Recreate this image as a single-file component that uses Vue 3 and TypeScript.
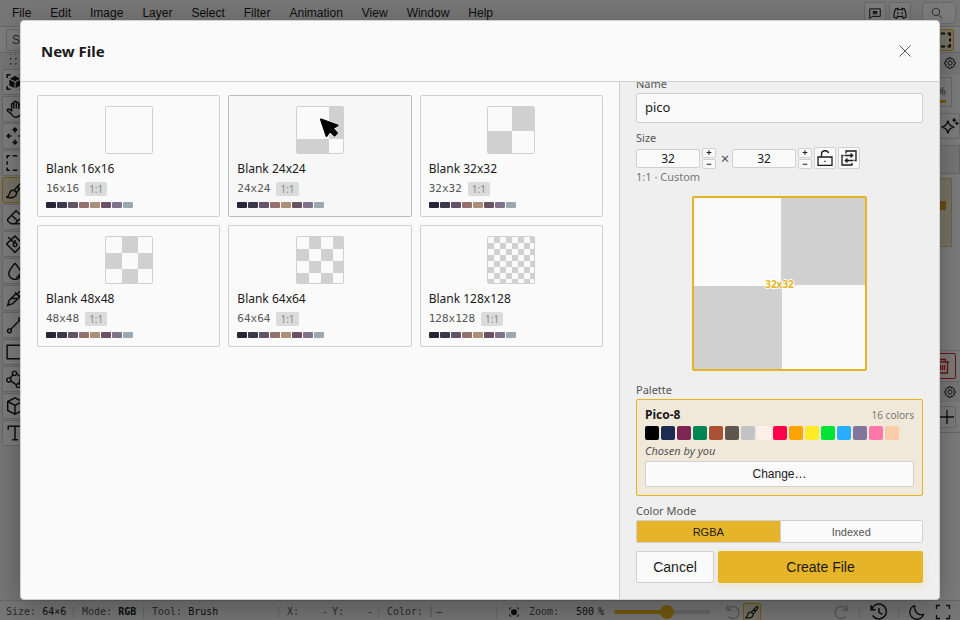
<script setup lang="ts">
import { ref } from 'vue'

interface Preset {
  size: number
  cell: string
}

const menus = ['File', 'Edit', 'Image', 'Layer', 'Select', 'Filter', 'Animation', 'View', 'Window', 'Help']

const presets: Preset[] = [16, 24, 32, 48, 64, 128].map((size) => ({
  size,
  cell: `${(48 * 32) / size}px`,
}))

const miniPalette = ['#292438', '#3c384c', '#625367', '#94716c', '#aa9079', '#6c5064', '#80728a', '#9ba8b1']

const pico = [
  '#000000', '#1d2b53', '#7e2553', '#008751', '#ab5236', '#5f574f', '#c2c3c7', '#fbf1e8',
  '#ff004d', '#ffa300', '#ffec27', '#00e436', '#29adff', '#83769c', '#ff77a8', '#f9ccaa',
]

const icons: Record<string, string> = {
  hand: 'M5 12.500 1.500 9.800c-1-1.400.6-2.400 1.600-1.400L5 9.500V4c0-1.500 2-1.500 2 0V7.500 2.200c0-1.500 2.200-1.500 2.200 0V7.500 3c0-1.400 2.200-1.400 2.200 0v5V5c0-1.400 2.200-1.400 2.200 0v5c0 3-2 5.300-4.700 5.300S6 14.500 5 12.500',
  move: 'M8 1v4M6 3l2-2 2 2M8 15v-4M6 13l2 2 2-2M1 8h4M3 6 1 8l2 2M15 8h-4M13 6l2 2-2 2',
  marquee: 'M1 4V1.500h2.500M6 1.500h4M12.500 1.500H15V4M15 6.500v3M15 12v2.500h-2.500M10 14.500H6M3.500 14.500H1V12M1 9.500v-3',
  brush: 'M7 8.500 13 2c1-1 2.500.3 1.700 1.500L9.500 10M7 8.500 9.500 10M6.800 8.300C4.500 7.800 3.500 9.500 3 11.500c-.4 1.500-1 2.500-2.500 3 4 .8 9 .5 9-4.500M10 5l2.700 2.500',
  eraser: 'M1.500 10 9 2.500l5.500 5L8 14H4.500L1.500 11.500zM5 6.500l5.500 5M4.500 14H15',
  bucket: 'M8 1 15 8l-7 7.500L.5 8zM2 2l6 5.500M8 4.500V7M8 7a1.600 1.600 0 1 0 .1 0',
  drop: 'M8 1C5 5 2.500 7 2.500 10.500a5.500 5 0 0 0 11 0C13.500 7 11 5 8 1M9 13.500c2 0 3-1.500 3-3',
  dropper: 'M9 4l3.500 3.500M8 3l5.500 5.500M10 4.500 12.500 2c1.200-1.200 3 .6 1.800 1.800L12 6.500M8.500 4.500 3 10l-1.500 4.500L6 13l5.500-5.500M5 8.500h5.500',
  line: 'M4.500 11.500l7-7M3 11.500a1.700 1.700 0 1 0 .1 0M13 1.300a1.700 1.700 0 1 0 .1 0',
  rect: 'M1 2h15v12H1z',
  poly: 'M3.500 7.500 6 4.500M9.500 3.500 13 6l-1.500 7M4 9.500l5.500 4M7.500 1a1.900 1.900 0 1 0 .1 0M2.500 7a1.900 1.900 0 1 0 .1 0M11 12a1.900 1.900 0 1 0 .1 0',
  cube: 'M8 .8 14.500 4v8L8 15.200 1.500 12V4zM1.500 4 8 7.500 14.500 4M8 7.500v7.700',
  text: 'M2 5V2h12v3M8 2v12M5.500 14h5',
  chat: 'M1 2.500h14v10H4.500L1 15.500zM5 6h6M5 9h6M5 7.500h6',
  search: 'M6.500 1.500a5 5 0 1 0 .1 0M10 10.500l5 5',
  gear: 'M6.700 1h2.600l.5 2 2.200-.8 1.700 1.800-.8 2 2.100.9v2.400l-2.100.8.8 2.100-1.700 1.800-2.200-.9-.5 2.100H6.700l-.6-2.100-2.100.9-1.800-1.800.9-2.100-2.100-.8V6.900l2.100-.9-.9-2L4 2.200l2.100.8zM8 5.200a2.800 2.800 0 1 0 .1 0',
  spark: 'M6.500 3c1 4 2 5 6 6-4 1-5 2-6 6-1-4-2-5-6-6 4-1 5-2 6-6M12.500.5v4M10.500 2.500h4M15 4v3M13.500 5.500h3',
  trash: 'M2 4h13M5.500 4V1.500h6V4M3.500 4v11h10V4M6.500 7v5M8.500 7v5M10.500 7v5',
  plus: 'M8 1v14M1 8h14',
  lock: 'M1 7h14v8.500H1zM4.500 7V4c0-4 6-4.300 7-1M8 10.700v1.200',
  swap: 'M5 3.500V1h10v9.500h-1.500M11 13v2H1V5.500h1.500M3.500 5.500h8M9.500 3.500l2.200 2-2.200 2M12.500 10.500h-8M6.500 8.500l-2.200 2 2.200 2',
  undo: 'M2 1.500v4.500h4.500M2.500 6a6 6 0 1 1 1 6.500',
  redo: 'M14 1.500v4.500H9.500M13.500 6a6 6 0 1 0-1 6.500',
  history: 'M1 2v4h4M1.500 6a6.600 6.600 0 1 1 .8 5M8 4.500v4l3 1.500',
  moon: 'M6 1.500A7 7 0 1 0 14.500 10.500C9 12 4.500 7.500 6 1.500',
  full: 'M1.500 5V1.500H5M11 1.500h3.500V5M14.500 11v3.500H11M5 14.500H1.500V11',
}

const tools = ['focus', 'hand', 'move', 'marquee', 'brush', 'eraser', 'bucket', 'drop', 'dropper', 'line', 'rect', 'poly', 'cube', 'text']

const name = ref('pico')
const width = ref('32')
const height = ref('32')
const zoom = ref(56)
const mode = ref('RGBA')
</script>

<template>
  <div class="app">
    <header class="menubar">
      <nav class="menus">
        <button v-for="m in menus" :key="m" type="button">{{ m }}</button>
      </nav>
      <div class="actions">
        <button class="square" type="button" aria-label="Feedback">
          <svg class="icon small" viewBox="0 0 16 16"><path :d="icons.chat" /></svg>
        </button>
        <button class="square" type="button" aria-label="Discord">
          <svg class="icon medium" viewBox="0 0 16 16">
            <path d="M5.500 2.500 3 3.300C1.500 6 .8 9 1 12.500L4.300 14l1-2h5.400l1 2 3.300-1.500c.2-3.500-.5-6.500-2-9.200l-2.500-.8L10 4H6zM4.500 5l1.500-1M11.500 5 10 4M4.500 11.300l1.500.7M11.500 11.300 10 12M5.700 7v2.500M10.300 7v2.500" />
          </svg>
        </button>
        <button class="search" type="button" aria-label="Search">
          <svg class="icon small thin" viewBox="0 0 16 16"><path :d="icons.search" /></svg>
        </button>
      </div>
    </header>

    <div class="optionbar">
      <button class="stroke" type="button">Stroke</button>
      <button class="square active" type="button" aria-label="Selection outline">
        <svg class="icon thick" viewBox="0 0 16 16"><path :d="icons.marquee" /></svg>
      </button>
    </div>

    <div class="workspace">
      <aside class="toolbox">
        <div class="grip"></div>
        <button v-for="t in tools" :key="t" type="button" :class="{ active: t === 'brush' }" :aria-label="t">
          <svg v-if="t === 'focus'" class="icon" viewBox="0 0 16 16">
            <path d="M1 4.500V1.500h3M12 1.500h3v3M15 11.500v3h-3M4 14.500H1v-3" />
            <path class="solid" d="M8 2.500 12.500 5 8 7.300 3.500 5zM3 6l4.500 2.300v5L3 11zM13 6 8.500 8.300v5L13 11z" />
          </svg>
          <svg v-else class="icon" viewBox="0 0 16 16"><path :d="icons[t]" /></svg>
        </button>
      </aside>
      <main class="canvas"></main>
      <aside class="side">
        <div class="side-head"><svg class="icon small" viewBox="0 0 16 16"><path :d="icons.gear" /></svg></div>
        <div class="percent">%<span></span></div>
        <button class="wide" type="button" aria-label="Effects">
          <svg class="icon large" viewBox="0 0 17 16"><path :d="icons.spark" /></svg>
        </button>
        <div class="band"></div>
        <div class="layer"><span></span></div>
        <div class="fill"></div>
        <button class="delete" type="button" aria-label="Delete layer">
          <svg class="icon" viewBox="0 0 16 16"><path :d="icons.trash" /></svg>
        </button>
        <div class="side-head lower"><svg class="icon small" viewBox="0 0 16 16"><path :d="icons.gear" /></svg></div>
        <button class="add" type="button" aria-label="Add">
          <svg class="icon" viewBox="0 0 16 16"><path :d="icons.plus" /></svg>
        </button>
        <div class="rest"></div>
      </aside>
    </div>

    <footer class="status">
      <span class="s-size">Size: <b class="plain">64×6</b></span>
      <span class="s-mode">Mode: <b>RGB</b></span>
      <span class="s-tool">Tool: <b class="plain">Brush</b></span>
      <span class="s-pos"><i>X:</i><i class="num">-</i><i class="second">Y:</i><i class="num">-</i></span>
      <span class="s-color">Color:<i class="chip"></i>—</span>
      <label class="s-zoom">
        <svg class="icon tiny" viewBox="0 0 16 16">
          <path d="M1 4.500V1.500h3M12 1.500h3v3M15 11.500v3h-3M4 14.500H1v-3" />
          <path class="solid" d="M8 3 12.500 5v6L8 13.500 3.500 11V5z" />
        </svg>
        <i class="zoom-label">Zoom:</i>
        <b class="plain zoom-value"><i>500</i><i>%</i></b>
        <input v-model.number="zoom" type="range" min="0" max="100" />
      </label>
      <div class="brushes">
        <svg class="icon faded" viewBox="0 0 16 16"><path :d="icons.undo" /></svg>
        <button type="button" aria-label="Brush"><svg class="icon medium" viewBox="0 0 16 16"><path :d="icons.brush" /></svg></button>
      </div>
      <div class="tail">
        <svg class="icon faded" viewBox="0 0 16 16"><path :d="icons.redo" /></svg>
        <i class="rule"></i>
        <svg class="icon large" viewBox="0 0 16 16"><path :d="icons.history" /></svg>
        <i class="rule"></i>
        <svg class="icon" viewBox="0 0 16 16"><path :d="icons.moon" /></svg>
        <svg class="icon" viewBox="0 0 16 16"><path :d="icons.full" /></svg>
      </div>
    </footer>

    <div class="overlay">
      <section class="modal" role="dialog" aria-labelledby="dialog-title">
        <header class="modal-head">
          <h1 id="dialog-title">New File</h1>
          <button type="button" aria-label="Close">
            <svg viewBox="0 0 12 12"><path d="M.5.5l11 11M11.500.5l-11 11" /></svg>
          </button>
        </header>
        <div class="modal-body">
          <div class="presets">
            <button v-for="p in presets" :key="p.size" type="button" class="card" :class="{ hover: p.size === 24 }">
              <span class="thumb" :class="{ blank: p.size === 16 }" :style="{ backgroundSize: `${p.cell} ${p.cell}` }">
                <svg v-if="p.size === 24" class="pointer" viewBox="0 0 22 22">
                  <path d="M3 2.500 19.500 8.500 14.500 11.500l4.500 4.500-2.500 2.500L12 14 8.500 19z" />
                </svg>
              </span>
              <span class="title">Blank {{ p.size }}x{{ p.size }}</span>
              <span class="meta">{{ p.size }}x{{ p.size }}<span class="ratio">1:1</span></span>
              <span class="mini"><i v-for="c in miniPalette" :key="c" :style="{ background: c }"></i></span>
            </button>
          </div>
          <form class="settings" @submit.prevent>
            <label class="caption" for="file-name">Name</label>
            <input id="file-name" v-model="name" class="name" type="text" />
            <label class="caption size-caption" for="file-width">Size</label>
            <div class="size-row">
              <input id="file-width" v-model="width" type="text" />
              <span class="stepper">
                <button type="button">+</button>
                <button type="button">−</button>
              </span>
              <span class="times">×</span>
              <input v-model="height" type="text" aria-label="Height" />
              <span class="stepper">
                <button type="button">+</button>
                <button type="button">−</button>
              </span>
              <button class="tool" type="button" aria-label="Lock ratio">
                <svg class="icon" viewBox="0 0 16 16"><path :d="icons.lock" /></svg>
              </button>
              <button class="tool" type="button" aria-label="Swap sides">
                <svg class="icon" viewBox="0 0 16 16"><path :d="icons.swap" /></svg>
              </button>
            </div>
            <p class="hint">1:1 · Custom</p>
            <div class="preview"><span>{{ width }}x{{ height }}</span></div>
            <p class="caption">Palette</p>
            <div class="palette">
              <div class="palette-head"><strong>Pico-8</strong><span>16 colors</span></div>
              <div class="colors"><i v-for="c in pico" :key="c" :style="{ background: c }"></i></div>
              <em>Chosen by you</em>
              <button type="button">Change…</button>
            </div>
            <p class="caption mode-caption">Color Mode</p>
            <div class="modes">
              <button v-for="m in ['RGBA', 'Indexed']" :key="m" type="button" :class="{ on: mode === m }" @click="mode = m">{{ m }}</button>
            </div>
            <div class="buttons">
              <button type="button" class="cancel">Cancel</button>
              <button type="submit" class="create">Create File</button>
            </div>
          </form>
        </div>
      </section>
    </div>
  </div>
</template>

<style>
body {
  overflow: hidden;
}
</style>

<style scoped>
* {
  box-sizing: border-box;
}
.app {
  height: 100vh;
  display: flex;
  flex-direction: column;
  background: #fafafa;
  color: #1a1a1a;
  font-family: "Noto Sans", sans-serif;
  font-size: 12px;
}
button,
input {
  font-family: "Liberation Sans", sans-serif;
  color: #1a1a1a;
  margin: 0;
  padding: 0;
  border: 1px solid #d0d0d0;
  border-radius: 2px;
  background: #fafafa;
}
i {
  font-style: normal;
}
p {
  margin: 0;
}
.icon {
  width: 16px;
  height: 16px;
  display: block;
  flex: none;
  fill: none;
  stroke: #1a1a1a;
  stroke-width: 1.3;
}
.icon.small {
  width: 12px;
  height: 12px;
}
.icon.medium {
  width: 14px;
  height: 14px;
}
.icon.tiny {
  width: 10px;
  height: 10px;
}
.icon.large {
  width: 18px;
  height: 18px;
}
.icon.thick {
  stroke-width: 2;
}
.icon.thin {
  stroke: #555555;
}
.icon.faded {
  opacity: 0.3;
}
.solid {
  fill: #1a1a1a;
  stroke: none;
}

/* Application behind the dialog */
.menubar {
  flex: none;
  height: 27px;
  display: flex;
  align-items: center;
  justify-content: space-between;
  background: #efefef;
  border-bottom: 1px solid #d0d0d0;
  padding: 0 4px;
}
.menus {
  display: flex;
  gap: 3px;
}
.menus button {
  font-size: 12px;
  border: 0;
  background: none;
  padding: 0 8px;
}
.actions {
  display: flex;
  gap: 3px;
}
.square {
  width: 22px;
  height: 22px;
  display: grid;
  place-items: center;
}
.search {
  width: 34px;
  height: 22px;
  margin-left: 8px;
  padding-left: 8px;
  border-radius: 4px;
}
.optionbar {
  flex: none;
  height: 26px;
  display: flex;
  align-items: center;
  justify-content: space-between;
  padding: 0 6px;
  border-bottom: 1px solid #d0d0d0;
}
.stroke {
  height: 22px;
  padding: 0 5px;
  font-size: 12px;
  color: #555555;
}
.active {
  border-color: #e6b422;
  background: #efe6cc;
}
.workspace {
  flex: 1;
  min-height: 0;
  display: flex;
}
.toolbox {
  width: 30px;
  padding: 0 2px;
  display: flex;
  flex-direction: column;
  gap: 1px;
  background: #efefef;
}
.grip {
  height: 14px;
  margin: 1px 6px 0;
  background: radial-gradient(circle, #808080 1px, transparent 1px) 0 2px / 5px 5px;
}
.toolbox button {
  height: 26px;
  display: flex;
  align-items: center;
  padding: 0 3px;
}
.toolbox .icon {
  width: 18px;
  height: 18px;
}
.canvas {
  flex: 1;
}
.side {
  width: 80px;
  display: flex;
  flex-direction: column;
}
.side-head {
  height: 22px;
  padding: 4px;
  display: flex;
  justify-content: flex-end;
  background: #efefef;
}
.percent {
  height: 30px;
  margin: 2px 8px 6px 0;
  padding: 4px 5px;
  border: 1px solid #d0d0d0;
  text-align: right;
  line-height: 18px;
  font-size: 11px;
  color: #555555;
}
.percent span {
  display: block;
  height: 3px;
  background: #e6b422;
}
.wide {
  height: 26px;
  display: flex;
  justify-content: flex-end;
  align-items: center;
}
.band {
  height: 29px;
  margin-top: 6px;
  border: 1px solid #d0d0d0;
  background: #efefef;
}
.layer {
  height: 69px;
  margin: 4px 8px 0 0;
  border: 1px solid #d9c68a;
  background: #efe6cc;
  display: flex;
  justify-content: flex-end;
  align-items: center;
}
.layer span {
  width: 12px;
  height: 9px;
  margin: 0 5px 14px 0;
  background: #d99b2c;
}
.fill {
  flex: 1;
  border-bottom: 1px solid #d0d0d0;
}
.delete {
  height: 26px;
  margin: 2px 4px;
  display: flex;
  justify-content: flex-end;
  align-items: center;
  padding-right: 5px;
  border-color: #e02020;
}
.delete .icon {
  stroke: #e02020;
}
.side .lower {
  height: 21px;
  border-top: 1px solid #d0d0d0;
}
.add {
  height: 22px;
  margin: 4px;
  display: flex;
  justify-content: flex-end;
  align-items: center;
}
.rest {
  height: 168px;
  border-top: 1px solid #d0d0d0;
}
.status {
  flex: none;
  height: 20px;
  padding: 2px 0 0 6px;
  display: flex;
  align-items: center;
  border-top: 1px solid #d0d0d0;
  background: #efefef;
  font-family: "DejaVu Sans Mono", monospace;
  font-size: 10px;
  line-height: 12px;
  white-space: pre;
  color: #555555;
}
.status > span {
  border-right: 1px solid #d0d0d0;
  margin-right: 8px;
}
.status b {
  color: #1a1a1a;
}
.status .plain {
  font-weight: 400;
}
.s-size {
  width: 68px;
}
.s-mode {
  width: 62px;
}
.s-tool {
  width: 127px;
}
.s-pos {
  width: 92px;
  display: flex;
}
.num {
  width: 29px;
  text-align: right;
}
.second {
  margin-left: 4px;
}
.s-color {
  width: 110px;
  display: flex;
  align-items: center;
}
.chip {
  width: 2px;
  height: 11px;
  margin: 0 4px 0 7px;
  background: #d0d0d0;
}
.s-zoom {
  display: flex;
  align-items: center;
  padding-left: 4px;
}
.zoom-label {
  width: 47px;
  margin-left: 10px;
}
.zoom-value {
  width: 28px;
  margin-right: 10px;
  display: flex;
  justify-content: space-between;
}
.s-zoom input {
  appearance: none;
  width: 96px;
  height: 4px;
  border: 0;
  border-radius: 2px;
  background: linear-gradient(90deg, #e6b422 55%, #d0d0d0 0);
}
.s-zoom input::-webkit-slider-thumb {
  appearance: none;
  width: 14px;
  height: 14px;
  border-radius: 50%;
  background: #e6b422;
}
.brushes {
  display: flex;
  align-items: center;
  gap: 2px;
  margin-left: 15px;
}
.brushes button {
  width: 18px;
  height: 18px;
  display: grid;
  place-items: center;
  border-color: #e6b422;
  background: #efe6cc;
}
.tail {
  display: flex;
  align-items: center;
  gap: 10px;
  margin-left: auto;
  padding-right: 9px;
}
.rule {
  width: 1px;
  height: 12px;
  background: #d0d0d0;
}

/* Dialog */
.overlay {
  position: absolute;
  inset: 0;
  padding: 20px;
  display: flex;
  background: rgba(0, 0, 0, 0.5);
}
.modal {
  flex: 1;
  min-width: 0;
  display: flex;
  flex-direction: column;
  overflow: hidden;
  border: 1px solid #d0d0d0;
  border-radius: 4px;
  background: #fafafa;
  box-shadow: 0 8px 32px rgba(0, 0, 0, 0.3);
}
.modal-head {
  flex: none;
  height: 61px;
  padding: 0 28px 0 20px;
  display: flex;
  align-items: center;
  justify-content: space-between;
  border-bottom: 1px solid #d0d0d0;
}
h1 {
  margin: 0;
  font-size: 15px;
  line-height: 20px;
}
.modal-head button {
  width: 12px;
  height: 12px;
  border: 0;
  background: none;
}
.modal-head svg {
  display: block;
  fill: none;
  stroke: #555555;
}
.modal-body {
  flex: 1;
  min-height: 0;
  display: grid;
  grid-template-columns: minmax(0, 1fr) 320px;
}
.presets {
  padding: 13px 16px;
  display: grid;
  grid-template-columns: repeat(3, minmax(0, 1fr));
  gap: 8px;
  align-content: start;
}
.card {
  display: flex;
  flex-direction: column;
  align-items: flex-start;
  padding: 10px 8px 8px;
  text-align: left;
  font-family: "Noto Sans", sans-serif;
}
.card.hover {
  border-color: #bcbcbc;
  background: #f7f7f7;
}
.thumb {
  align-self: center;
  position: relative;
  width: 48px;
  height: 48px;
  border: 1px solid #d0d0d0;
  border-radius: 2px;
  background: conic-gradient(#d0d0d0 25%, #fafafa 0 50%, #d0d0d0 0 75%, #fafafa 0);
  background-origin: padding-box;
}
.thumb.blank {
  background: #fafafa;
}
.pointer {
  position: absolute;
  left: 21px;
  top: 10px;
  width: 22px;
  height: 22px;
  stroke: #000000;
  stroke-width: 2;
  stroke-linejoin: round;
  filter: drop-shadow(0 0 1px #ffffff);
}
.title {
  margin-top: 6px;
  font-size: 12px;
  line-height: 18px;
}
.meta {
  margin-top: 4px;
  display: flex;
  align-items: center;
  gap: 6px;
  font-family: "DejaVu Sans Mono", monospace;
  font-size: 11px;
  line-height: 14px;
  color: #555555;
}
.ratio {
  padding: 0 4px;
  border-radius: 2px;
  background: #dadcdc;
  color: #888888;
  font-family: "Noto Sans", sans-serif;
  font-size: 10px;
}
.mini {
  margin-top: 6px;
  display: flex;
  gap: 1px;
}
.mini i {
  width: 10px;
  height: 6px;
  border-radius: 1px;
}
.settings {
  min-height: 0;
  overflow: hidden;
  display: flex;
  flex-direction: column;
  justify-content: flex-end;
  padding: 16px;
  border-left: 1px solid #d0d0d0;
  background: #efefef;
}
.settings > * {
  flex: none;
}
.caption {
  font-size: 11px;
  line-height: 18px;
  color: #555555;
}
.name {
  height: 30px;
  padding: 0 8px 2px;
  font-family: "Noto Sans", sans-serif;
  font-size: 13px;
}
.size-caption {
  margin-top: 6px;
}
.size-row {
  display: flex;
  align-items: center;
  height: 22px;
}
.size-row > input {
  width: 64px;
  height: 19px;
  text-align: center;
  font-family: "Noto Sans", sans-serif;
  font-size: 12px;
}
.stepper {
  display: flex;
  flex-direction: column;
  gap: 1px;
  margin: 0 2px;
}
.stepper button {
  width: 14px;
  height: 10px;
  font-size: 9px;
  line-height: 8px;
  font-weight: 700;
}
.times {
  width: 14px;
  text-align: center;
  font-size: 15px;
  line-height: 18px;
  color: #555555;
}
.tool {
  width: 22px;
  height: 22px;
  margin-right: 2px;
  display: grid;
  place-items: center;
}
.hint {
  font-size: 11px;
  line-height: 16px;
  color: #777777;
}
.preview {
  align-self: center;
  width: 175px;
  height: 175px;
  margin: 11px 0 10px;
  display: grid;
  place-items: center;
  border: 2px solid #e6b422;
  border-radius: 2px;
  background: conic-gradient(#d0d0d0 25%, #fafafa 0 50%, #d0d0d0 0 75%, #fafafa 0);
  background-size: 175px 175px;
}
.preview span {
  font-size: 10px;
  line-height: 12px;
  font-weight: 700;
  color: #e6b422;
  text-shadow: 1px 0 #ffffff, -1px 0 #ffffff, 0 1px #ffffff, 0 -1px #ffffff;
}
.palette {
  padding: 7px 8px 8px;
  display: flex;
  flex-direction: column;
  border: 1px solid #e6b422;
  border-radius: 2px;
  background: #f0e9da;
}
.palette-head {
  display: flex;
  justify-content: space-between;
  line-height: 16px;
  font-size: 12px;
}
.palette-head span {
  font-size: 10px;
  color: #777777;
}
.colors {
  margin-top: 3px;
  display: flex;
  gap: 2px;
}
.colors i {
  width: 14px;
  height: 14px;
  border-radius: 2px;
}
em {
  margin: 2px 0;
  font-size: 11px;
  line-height: 17px;
  color: #555555;
}
.palette button {
  height: 26px;
  font-size: 12px;
}
.mode-caption {
  margin-top: 6px;
}
.modes {
  height: 23px;
  display: grid;
  grid-template-columns: 1fr 1fr;
  border: 1px solid #d0d0d0;
  border-radius: 2px;
  background: #fafafa;
}
.modes button {
  border: 0;
  border-radius: 0;
  font-size: 11px;
  color: #555555;
}
.modes button + button {
  border-left: 1px solid #d0d0d0;
}
.modes .on {
  background: #e6b428;
  color: #1a1a1a;
}
.buttons {
  margin-top: 8px;
  display: flex;
  gap: 4px;
}
.buttons button {
  height: 32px;
  font-size: 14px;
}
.cancel {
  width: 78px;
}
.buttons .create {
  flex: 1;
  border-color: #e6b428;
  background: #e6b428;
  box-shadow: 0 2px 8px rgba(230, 180, 34, 0.2);
}
</style>
